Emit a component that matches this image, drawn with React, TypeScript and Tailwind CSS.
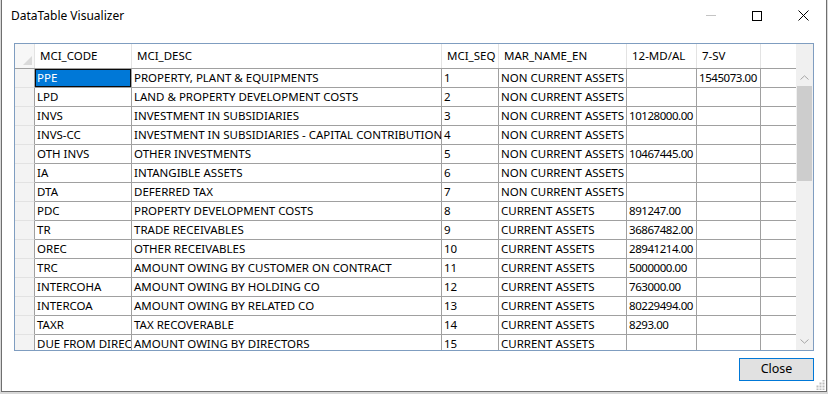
import clsx from "clsx";

type Row = {
  code: string;
  desc: string;
  seq: string;
  mar: string;
  md: string;
  sv: string;
};

const rows: Row[] = [
  { code: "PPE", desc: "PROPERTY, PLANT & EQUIPMENTS", seq: "1", mar: "NON CURRENT ASSETS", md: "", sv: "1545073.00" },
  { code: "LPD", desc: "LAND & PROPERTY DEVELOPMENT COSTS", seq: "2", mar: "NON CURRENT ASSETS", md: "", sv: "" },
  { code: "INVS", desc: "INVESTMENT IN SUBSIDIARIES", seq: "3", mar: "NON CURRENT ASSETS", md: "10128000.00", sv: "" },
  { code: "INVS-CC", desc: "INVESTMENT IN SUBSIDIARIES - CAPITAL CONTRIBUTION", seq: "4", mar: "NON CURRENT ASSETS", md: "", sv: "" },
  { code: "OTH INVS", desc: "OTHER INVESTMENTS", seq: "5", mar: "NON CURRENT ASSETS", md: "10467445.00", sv: "" },
  { code: "IA", desc: "INTANGIBLE ASSETS", seq: "6", mar: "NON CURRENT ASSETS", md: "", sv: "" },
  { code: "DTA", desc: "DEFERRED TAX", seq: "7", mar: "NON CURRENT ASSETS", md: "", sv: "" },
  { code: "PDC", desc: "PROPERTY DEVELOPMENT COSTS", seq: "8", mar: "CURRENT ASSETS", md: "891247.00", sv: "" },
  { code: "TR", desc: "TRADE RECEIVABLES", seq: "9", mar: "CURRENT ASSETS", md: "36867482.00", sv: "" },
  { code: "OREC", desc: "OTHER RECEIVABLES", seq: "10", mar: "CURRENT ASSETS", md: "28941214.00", sv: "" },
  { code: "TRC", desc: "AMOUNT OWING BY CUSTOMER ON CONTRACT", seq: "11", mar: "CURRENT ASSETS", md: "5000000.00", sv: "" },
  { code: "INTERCOHA", desc: "AMOUNT OWING BY HOLDING CO", seq: "12", mar: "CURRENT ASSETS", md: "763000.00", sv: "" },
  { code: "INTERCOA", desc: "AMOUNT OWING BY RELATED CO", seq: "13", mar: "CURRENT ASSETS", md: "80229494.00", sv: "" },
  { code: "TAXR", desc: "TAX RECOVERABLE", seq: "14", mar: "CURRENT ASSETS", md: "8293.00", sv: "" },
  { code: "DUE FROM DIREC", desc: "AMOUNT OWING BY DIRECTORS", seq: "15", mar: "CURRENT ASSETS", md: "", sv: "" },
];

// column widths include the 1px right gridline
const cols = [
  { key: "code", label: "MCI_CODE", w: "w-[97px]", num: false },
  { key: "desc", label: "MCI_DESC", w: "w-[310px]", num: false },
  { key: "seq", label: "MCI_SEQ", w: "w-[57px]", num: false },
  { key: "mar", label: "MAR_NAME_EN", w: "w-[128px]", num: false },
  { key: "md", label: "12-MD/AL", w: "w-[70px]", num: true },
  { key: "sv", label: "7-SV", w: "w-[64px]", num: true },
] as const;

const Chevron = ({ up }: { up?: boolean }) => (
  <svg width="9" height="5" viewBox="0 0 9 5" className="block">
    <path
      d={up ? "M0.5 4.5 L4.5 0.8 L8.5 4.5" : "M0.5 0.5 L4.5 4.2 L8.5 0.5"}
      fill="none"
      stroke="#a6a6a6"
      strokeWidth="1"
    />
  </svg>
);

const Grip = () => (
  <svg width="10" height="10" viewBox="0 0 10 10" className="block">
    {[
      [8, 0], [8, 3], [5, 3], [8, 6], [5, 6], [2, 6], [8, 9], [5, 9], [2, 9],
    ].map(([x, y]) => (
      <rect key={`${x}-${y}`} x={x - 0.5} y={y - 0.5} width="2" height="2" fill="#bdbdbd" />
    ))}
  </svg>
);

const TitleBar = () => (
  <div className="flex h-[31px] shrink-0 items-center bg-white">
    <span className="pl-[9px] text-[12px] text-black">DataTable Visualizer</span>
    <div className="ml-auto flex h-full items-center">
      <div className="flex h-full w-[46px] items-center justify-center">
        <div className="h-px w-[10px] bg-[#c4c4c4]" />
      </div>
      <div className="flex h-full w-[46px] items-center justify-center">
        <div className="h-[10px] w-[10px] border border-black" />
      </div>
      <div className="flex h-full w-[46px] items-center justify-center">
        <svg width="11" height="11" viewBox="0 0 11 11" className="block">
          <path d="M0.5 0.5 L10.5 10.5 M10.5 0.5 L0.5 10.5" stroke="#000" strokeWidth="1" />
        </svg>
      </div>
    </div>
  </div>
);

const Grid = () => (
  <div className="flex h-[308px] w-[800px] overflow-hidden border border-[#7f9dc0] bg-white">
    <div className="flex w-[781px] flex-col">
      {/* header */}
      <div className="flex h-[25px] shrink-0 border-b border-[#a0a0a0] bg-white">
        <div className="relative w-[20px] shrink-0 border-r border-[#e3e3e3] bg-[#f7f7f7]">
          <svg width="9" height="9" viewBox="0 0 9 9" className="absolute bottom-[3px] right-[2px]">
            <path d="M9 0 L9 9 L0 9 Z" fill="#dadada" />
          </svg>
        </div>
        {cols.map(c => (
          <div
            key={c.key}
            className={clsx(c.w, "flex shrink-0 items-center overflow-hidden whitespace-nowrap border-r border-[#e3e3e3] pl-[5px] text-[11.5px] text-black")}
          >
            {c.label}
          </div>
        ))}
        <div className="w-[35px] shrink-0" />
      </div>
      {/* rows */}
      {rows.map((r, i) => (
        <div key={r.seq} className="flex h-[19px] shrink-0">
          <div className="w-[20px] shrink-0 border-b border-r border-b-[#e2e2e2] border-r-[#a0a0a0] bg-[#f3f3f3]" />
          {cols.map(c => {
            const selected = i === 0 && c.key === "code";
            return (
              <div
                key={c.key}
                className={clsx(
                  c.w,
                  "flex shrink-0 items-center overflow-hidden whitespace-nowrap border-b border-r border-[#a0a0a0] pl-[2px] text-[11.5px]",
                  c.num && "tracking-[-0.45px]",
                  selected ? "bg-[#0078d7] text-white shadow-[inset_0_0_0_1px_#0a0a0a]" : "text-black"
                )}
              >
                {r[c.key]}
              </div>
            );
          })}
          <div className="w-[35px] shrink-0 border-b border-[#a0a0a0]" />
        </div>
      ))}
    </div>
    {/* vertical scrollbar */}
    <div className="flex w-[17px] shrink-0 flex-col bg-[#f0f0f0]">
      <div className="h-[25px] shrink-0" />
      <div className="flex h-[17px] shrink-0 items-center justify-center">
        <Chevron up />
      </div>
      <div className="mx-px h-[95px] shrink-0 bg-[#cdcdcd]" />
      <div className="flex-1" />
      <div className="flex h-[17px] shrink-0 items-center justify-center">
        <Chevron />
      </div>
    </div>
  </div>
);

export default function App() {
  return (
    <div className="h-[394px] w-[828px] overflow-hidden bg-[#d8d8d8] font-['Segoe_UI','Noto_Sans',sans-serif]">
      <div className="ml-px flex h-[392px] w-[826px] flex-col border-x border-b border-[#6f6f6f] bg-white">
        <TitleBar />
        <div className="relative flex flex-1 flex-col px-[12px] pt-[12px]">
          <Grid />
          <div className="mt-[7px] flex justify-end">
            <button className="h-[23px] w-[75px] border border-[#0078d7] bg-[#e1e1e1] text-[12.5px] text-black">
              Close
            </button>
          </div>
          <div className="absolute bottom-[1px] right-[1px]">
            <Grip />
          </div>
        </div>
      </div>
    </div>
  );
}
